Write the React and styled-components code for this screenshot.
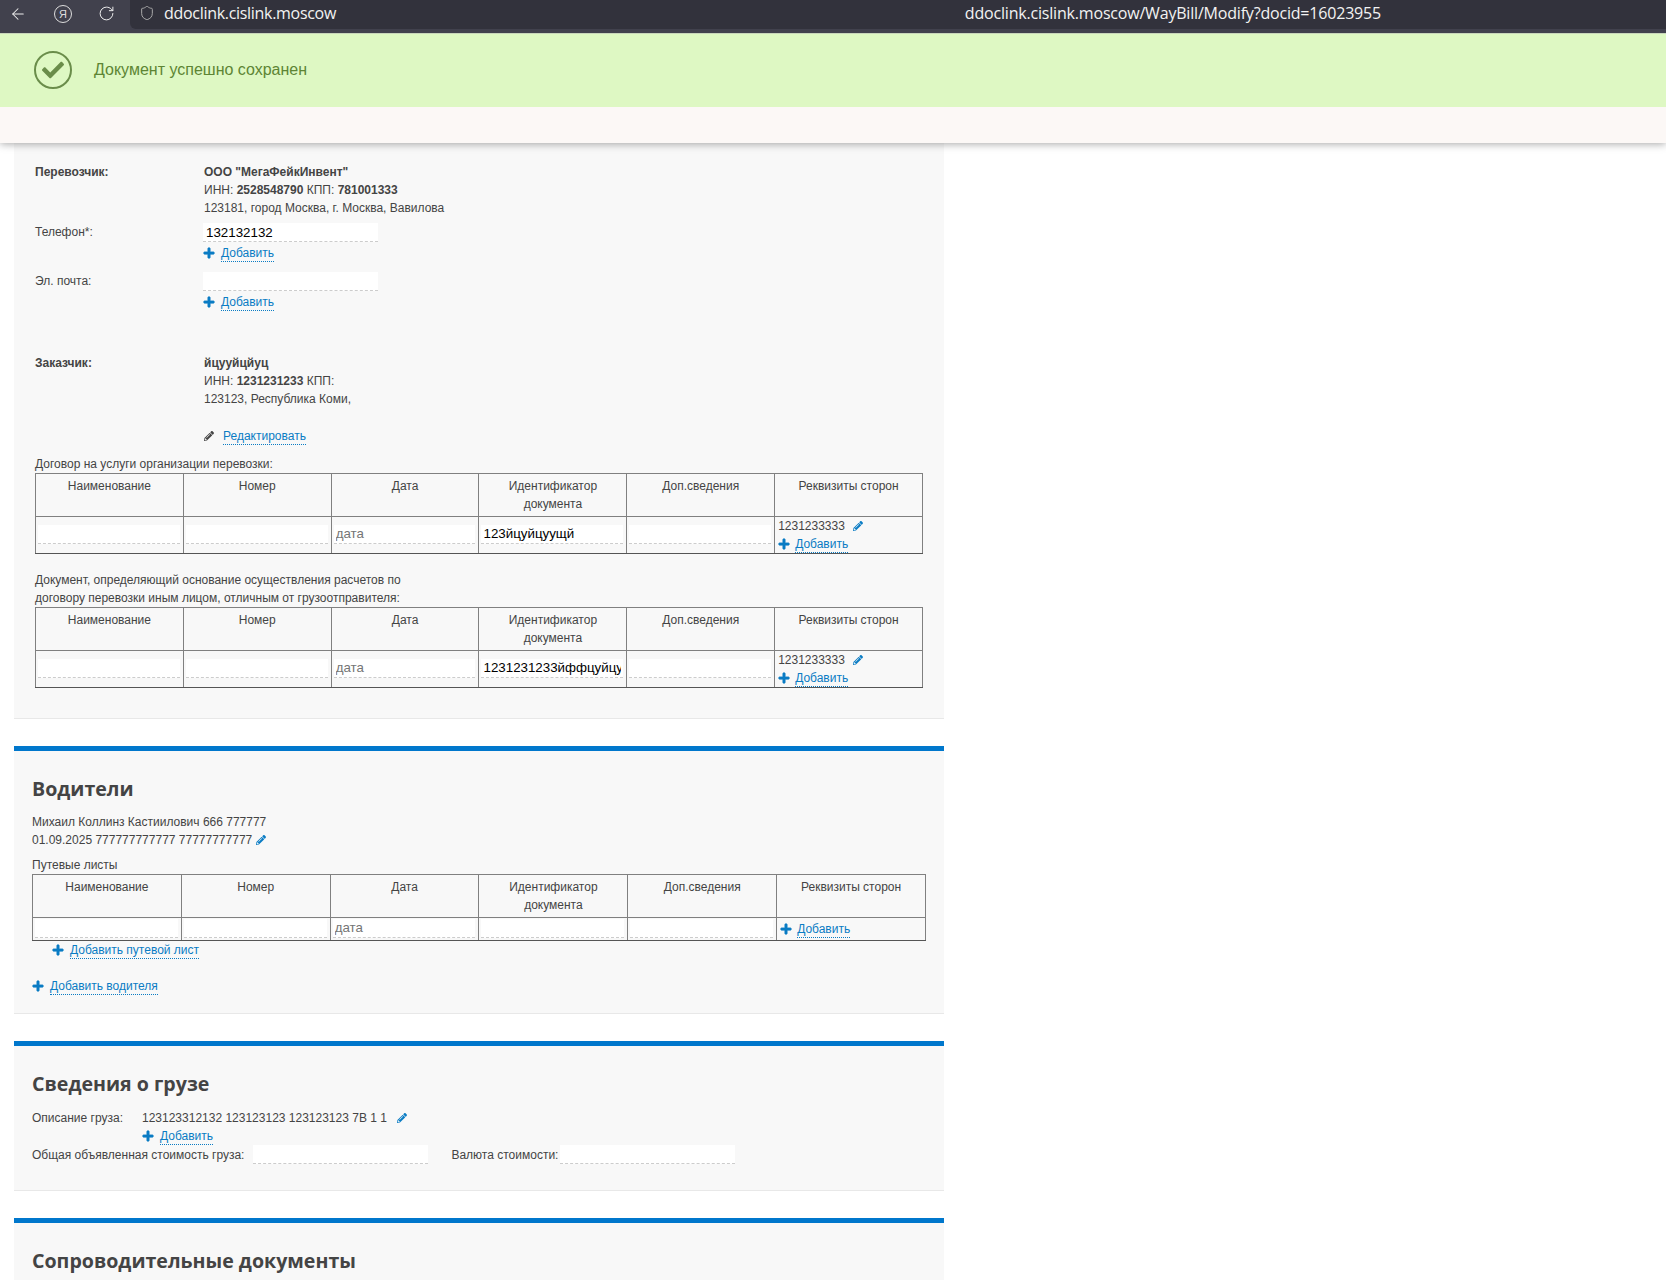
import styled, { createGlobalStyle } from 'styled-components'
import { ArrowLeft, RotateCw, Shield } from 'lucide-react'
import { FaPlus, FaPencilAlt, FaCheck } from 'react-icons/fa'

const GlobalStyle = createGlobalStyle`
  html, body {
    margin: 0;
    padding: 0;
    background: #fff;
  }
  * {
    box-sizing: border-box;
  }
`

const Page = styled.div`
  height: 1280px;
  overflow: hidden;
  font-family: "Liberation Sans", Arial, sans-serif;
  font-size: 12px;
  line-height: 18px;
  color: #444;
`
const Header = styled.header`
  position: relative;
  z-index: 2;
  box-shadow: 0 1px 8px rgba(0, 0, 0, 0.35);
`
const BrowserBar = styled.div`
  height: 34px;
  display: flex;
  background: #41414d;
  border-bottom: 1px solid #c9d6bb;
`
const NavButtons = styled.div`
  width: 130px;
  height: 27px;
  display: flex;
  align-items: center;
  padding-left: 9px;
  color: #eee;
`
const NavSlot = styled.span`
  display: flex;
  align-items: center;
  margin-right: ${(p) => p.$gap}px;
`
const YandexMark = styled.span`
  width: 18px;
  height: 18px;
  border: 1px solid #ddd;
  border-radius: 50%;
  display: flex;
  align-items: center;
  justify-content: center;
  font-size: 11px;
  color: #ddd;
`
const AddressBar = styled.div`
  flex: 1;
  height: 29px;
  display: flex;
  align-items: center;
  justify-content: space-between;
  padding: 0 285px 3px 9px;
  background: #32323c;
  border-bottom-left-radius: 6px;
  font-family: "Open Sans", sans-serif;
  font-size: 16px;
  color: #f2f2f2;
`
const Domain = styled.span`
  display: flex;
  align-items: center;
  gap: 9px;
  letter-spacing: -0.3px;
  color: #aaa;
`
const DomainText = styled.span`
  color: #f2f2f2;
`
const FullUrl = styled.span`
  letter-spacing: -0.19px;
`
const Banner = styled.div`
  height: 73px;
  display: flex;
  align-items: center;
  padding: 0 0 2px 34px;
  background: #def8c3;
  color: #5d8534;
  font-size: 16px;
`
const CheckCircle = styled.span`
  width: 38px;
  height: 38px;
  margin-right: 22px;
  border: 2px solid #6a8d4a;
  border-radius: 50%;
  display: flex;
  align-items: center;
  justify-content: center;
  color: #6a8d4a;
  font-size: 22px;
`
const BeigeBar = styled.div`
  height: 36px;
  background: #fcf8f6;
`
const Section = styled.section`
  width: 930px;
  margin: 0 0 27px 14px;
  padding: ${(p) => p.$pad};
  background: #f8f8f8;
  border-top: ${(p) => (p.$accent ? '5px solid #0077cc' : 'none')};
  border-bottom: 1px solid #e8e8e8;
`
const Heading = styled.h2`
  margin: 0 0 10px;
  font-family: "Open Sans", sans-serif;
  font-size: 19.6px;
  line-height: 28px;
  font-weight: 700;
  color: #444;
`
const FieldGrid = styled.div`
  display: grid;
  grid-template-columns: 169px 1fr;
  margin-top: ${(p) => p.$top || 0}px;
`
const Stack = styled.div`
  display: flex;
  flex-direction: column;
`
const Strong = styled.b`
  font-weight: 700;
`
const TextInput = styled.input`
  display: block;
  width: ${(p) => (p.$wide ? '175px' : '100%')};
  height: 19px;
  margin: ${(p) => p.$margin || 0};
  padding: 0 3px;
  background: #fff;
  border: 0;
  border-bottom: 1px dashed #ccc;
  outline: none;
  font-family: "Liberation Sans", Arial, sans-serif;
  font-size: 13.33px;
  color: #000;
  &::placeholder {
    color: #757575;
    opacity: 1;
  }
`
const ActionRow = styled.div`
  display: flex;
  align-items: center;
  height: 18px;
  margin: ${(p) => p.$margin || 0};
  color: #0a7cc4;
`
const ActionIcon = styled.span`
  width: ${(p) => p.$width || 18}px;
  display: flex;
  align-items: center;
  font-size: ${(p) => p.$size || 12}px;
  color: ${(p) => p.$color || '#0a7cc4'};
  svg {
    stroke: currentColor;
    stroke-width: ${(p) => (p.$size ? 0 : 30)};
  }
`
const ActionLink = styled.a`
  margin-top: 2px;
  color: #0a7cc4;
  line-height: 15px;
  border-bottom: 1px dotted #0a7cc4;
  cursor: pointer;
`
const Caption = styled.div`
  margin-top: ${(p) => p.$top || 0}px;
`
const DocTable = styled.table`
  width: 100%;
  table-layout: fixed;
  border-collapse: collapse;
`
const HeadCell = styled.th`
  height: 43px;
  padding: 3px 4px 3px;
  border: 1px solid #808080;
  vertical-align: top;
  text-align: center;
  font-weight: 400;
`
const BodyCell = styled.td`
  height: ${(p) => p.$height}px;
  padding: 0 3px 0 2px;
  border: 1px solid #808080;
  border-bottom-color: #555;
  vertical-align: middle;
`
const CellInput = styled(TextInput)`
  margin-bottom: 2px;
  padding: 0 2px;
`
const PartyValue = styled.div`
  display: flex;
  align-items: center;
  gap: 8px;
  padding-left: 1px;
  height: 18px;
`
const PencilMark = styled.span`
  display: inline-flex;
  font-size: 10px;
  color: #0a7cc4;
`
const PartyAdd = styled(ActionRow)`
  padding-left: 1px;
`
const InlineRow = styled.div`
  display: flex;
  align-items: center;
`
const Spacer = styled.span`
  margin-right: ${(p) => p.$right || 0}px;
  margin-left: ${(p) => p.$left || 0}px;
`
const CargoGrid = styled.div`
  display: grid;
  grid-template-columns: 110px 1fr;
  padding-top: 1px;
`

const columns = ['Наименование', 'Номер', 'Дата', 'Идентификатор документа', 'Доп.сведения', 'Реквизиты сторон']

const AddLink = ({ label = 'Добавить', margin }) => (
  <ActionRow $margin={margin}>
    <ActionIcon><FaPlus /></ActionIcon>
    <ActionLink>{label}</ActionLink>
  </ActionRow>
)

const Documents = ({ identifier, party, height }) => (
  <DocTable>
    <thead>
      <tr>
        {columns.map((c) => <HeadCell key={c}>{c}</HeadCell>)}
      </tr>
    </thead>
    <tbody>
      <tr>
        <BodyCell $height={height}><CellInput readOnly /></BodyCell>
        <BodyCell $height={height}><CellInput readOnly /></BodyCell>
        <BodyCell $height={height}><CellInput readOnly placeholder="дата" /></BodyCell>
        <BodyCell $height={height}><CellInput readOnly defaultValue={identifier} /></BodyCell>
        <BodyCell $height={height}><CellInput readOnly /></BodyCell>
        <BodyCell $height={height}>
          {party && (
            <PartyValue>
              {party}
              <PencilMark><FaPencilAlt /></PencilMark>
            </PartyValue>
          )}
          <PartyAdd>
            <ActionIcon $width={17}><FaPlus /></ActionIcon>
            <ActionLink>Добавить</ActionLink>
          </PartyAdd>
        </BodyCell>
      </tr>
    </tbody>
  </DocTable>
)

const App = () => {
  return (
    <Page>
      <GlobalStyle />
      <Header>
        <BrowserBar>
          <NavButtons>
            <NavSlot $gap={27}><ArrowLeft size={18} strokeWidth={1.4} /></NavSlot>
            <NavSlot $gap={26}><YandexMark>Я</YandexMark></NavSlot>
            <NavSlot $gap={0}><RotateCw size={17} strokeWidth={1.4} /></NavSlot>
          </NavButtons>
          <AddressBar>
            <Domain>
              <Shield size={16} strokeWidth={1.5} />
              <DomainText>ddoclink.cislink.moscow</DomainText>
            </Domain>
            <FullUrl>ddoclink.cislink.moscow/WayBill/Modify?docid=16023955</FullUrl>
          </AddressBar>
        </BrowserBar>
        <Banner>
          <CheckCircle><FaCheck /></CheckCircle>
          Документ успешно сохранен
        </Banner>
        <BeigeBar />
      </Header>

      <Section $pad="20px 21px 30px">
        <FieldGrid>
          <Strong>Перевозчик:</Strong>
          <Stack>
            <Strong>ООО "МегаФейкИнвент"</Strong>
            <span>ИНН: <Strong>2528548790</Strong> КПП: <Strong>781001333</Strong></span>
            <span>123181, город Москва, г. Москва, Вавилова</span>
          </Stack>
        </FieldGrid>
        <FieldGrid $top={6}>
          <span>Телефон*:</span>
          <Stack>
            <TextInput $wide $margin="0 0 0 -1px" readOnly defaultValue="132132132" />
            <AddLink margin="2px 0 0 -1px" />
          </Stack>
        </FieldGrid>
        <FieldGrid $top={10}>
          <span>Эл. почта:</span>
          <Stack>
            <TextInput $wide $margin="0 0 0 -1px" readOnly />
            <AddLink margin="2px 0 0 -1px" />
          </Stack>
        </FieldGrid>
        <FieldGrid $top={43}>
          <Strong>Заказчик:</Strong>
          <Stack>
            <Strong>йцууйцйуц</Strong>
            <span>ИНН: <Strong>1231231233</Strong> КПП:</span>
            <span>123123, Республика Коми,</span>
            <ActionRow $margin="19px 0 0">
              <ActionIcon $width={19} $size={10} $color="#444"><FaPencilAlt /></ActionIcon>
              <ActionLink>Редактировать</ActionLink>
            </ActionRow>
          </Stack>
        </FieldGrid>
        <Caption $top={10}>Договор на услуги организации перевозки:</Caption>
        <Documents identifier="123йцуйцуущй" party="1231233333" height={37} />
        <Caption $top={17}>
          Документ, определяющий основание осуществления расчетов по<br />
          договору перевозки иным лицом, отличным от грузоотправителя:
        </Caption>
        <Documents identifier="1231231233йффцуйцуйцу" party="1231233333" height={37} />
      </Section>

      <Section $accent $pad="24px 18px 18px">
        <Heading>Водители</Heading>
        <div>Михаил Коллинз Кастиилович 666 777777</div>
        <InlineRow>
          01.09.2025 777777777777 77777777777
          <Spacer $left={4} />
          <PencilMark><FaPencilAlt /></PencilMark>
        </InlineRow>
        <Caption $top={7}>Путевые листы</Caption>
        <Documents height={23} />
        <AddLink label="Добавить путевой лист" margin="0 0 0 20px" />
        <AddLink label="Добавить водителя" margin="18px 0 0" />
      </Section>

      <Section $accent $pad="24px 18px 26px">
        <Heading>Сведения о грузе</Heading>
        <CargoGrid>
          <span>Описание груза:</span>
          <Stack>
            <InlineRow>
              123123312132 123123123 123123123 7В 1 1
              <Spacer $left={10} />
              <PencilMark><FaPencilAlt /></PencilMark>
            </InlineRow>
            <AddLink />
          </Stack>
        </CargoGrid>
        <InlineRow>
          <span>Общая объявленная стоимость груза:</span>
          <Spacer $right={9} />
          <TextInput $wide readOnly />
          <Spacer $right={23} />
          <span>Валюта стоимости:</span>
          <Spacer $right={2} />
          <TextInput $wide readOnly />
        </InlineRow>
      </Section>

      <Section $accent $pad="24px 18px 40px">
        <Heading>Сопроводительные документы</Heading>
      </Section>
    </Page>
  )
}

export default App
